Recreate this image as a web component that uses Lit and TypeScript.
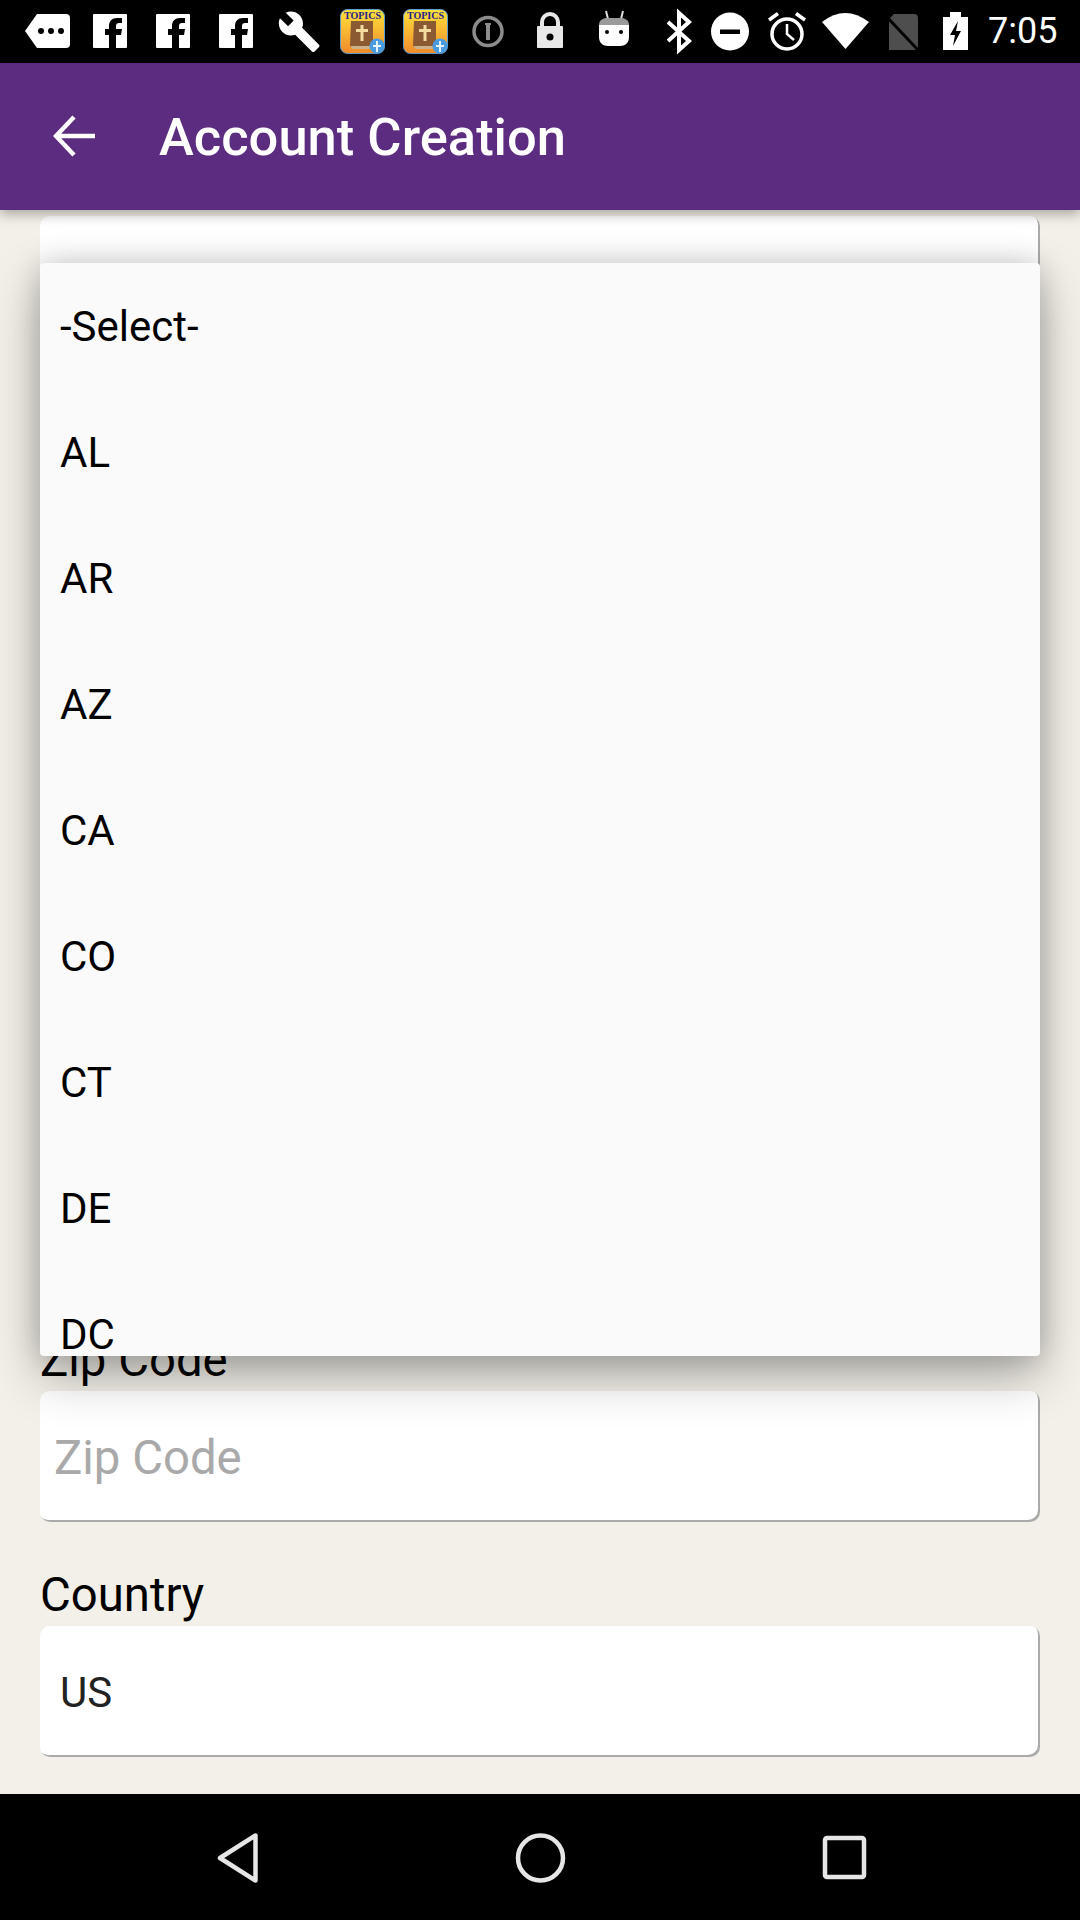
import { LitElement, css, html, svg } from 'lit'
import { customElement } from 'lit/decorators.js'

// width of each status cell runs up to the left edge of the next icon
const cell = (w: number, body: unknown) => html`<svg class="cell" width=${w} height="63" viewBox="0 0 ${w} 63">${body}</svg>`

const fb = svg`
  <rect y="14" width="34" height="34" rx="1" fill="#fff" />
  <path d="M23 48V35h5l1-6h-6v-3c0-2 1-3 3-3h3v-5h-5c-5 0-8 3-8 8v3h-4v6h4v13z" fill="#000" />`

const topics = (id: string) => svg`
  <defs>
    <linearGradient id=${id} x1="0" y1="0" x2="0" y2="1">
      <stop offset="0" stop-color="#ffe23a" />
      <stop offset="1" stop-color="#f08a2c" />
    </linearGradient>
  </defs>
  <rect x="0.5" y="9.5" width="44" height="44" rx="7" fill="url(#${id})" stroke="#5a9bd0" />
  <path d="M11 21h22v27H15c-3 0-5-1-5-3z" fill="#8b5a32" />
  <path d="M11 46h22v3H14c-2 0-3-1-3-3z" fill="#c9b28c" />
  <path d="M20.5 25h3v4h4.500v3h-4.500v9h-3v-9H16v-3h4.500z" fill="#f3dca0" />
  <circle cx="37" cy="46" r="7.500" fill="#4a9be0" />
  <path d="M36 41h2v4h3v2h-3v5h-2v-5h-3v-2h3z" fill="#e6f3ff" />
  <text x="22.500" y="19" text-anchor="middle" font-family="'Liberation Serif', serif" font-weight="700" font-size="10" fill="#24208a">TOPICS</text>`

const leftIcons = [
  cell(68, svg`
    <path d="M12 14h29a4 4 0 0 1 4 4v26a4 4 0 0 1-4 4H12L0 31z" fill="#fff" />
    <circle cx="16" cy="31" r="3" fill="#000" /><circle cx="26" cy="31" r="3" fill="#000" /><circle cx="36" cy="31" r="3" fill="#000" />`),
  cell(63, fb),
  cell(63, fb),
  cell(59, fb),
  cell(62, svg`
    <g transform="translate(-1 9.500) scale(1.85)">
      <path d="M22.700 19l-9.100-9.100c.9-2.300.4-5-1.500-6.900-2-2-5-2.400-7.400-1.300L9 6 6 9 1.600 4.700C.4 7.100.9 10.100 2.900 12.100c1.900 1.900 4.600 2.400 6.900 1.500l9.100 9.100c.4.4 1 .4 1.400 0l2.300-2.300c.5-.4.5-1.100.1-1.400z" fill="#fff" />
    </g>`),
  cell(63, topics('t1')),
  cell(69, topics('t2')),
  cell(65, svg`
    <circle cx="16" cy="31.500" r="14" fill="none" stroke="#8c8c8c" stroke-width="3.500" />
    <rect x="14" y="23" width="4" height="17" fill="#8c8c8c" />
    <rect x="13" y="23" width="6" height="2" fill="#8c8c8c" />`),
  cell(62, svg`
    <path d="M5 27v-5a8 8 0 0 1 16 0v5" fill="none" stroke="#e8e8e8" stroke-width="4" />
    <rect y="26" width="26" height="22" rx="1" fill="#e8e8e8" />
    <circle cx="13" cy="37" r="3.500" fill="#000" />`),
  cell(68, svg`
    <path d="M7 11l2 8M24 11l-2 8" stroke="#ddd" stroke-width="2" />
    <path d="M0 25c0-5 4-7 8-7h14c4 0 8 2 8 7v3H0z" fill="#9a9a9a" />
    <path d="M0 25h30v12c0 6-4 9-9 9H9c-5 0-9-3-9-9z" fill="#fff" />
    <circle cx="8" cy="32" r="2" fill="#000" /><circle cx="22" cy="32" r="2" fill="#000" />`),
]

const rightIcons = [
  cell(44, svg`<path d="M1 22l21 19-10 9V13l10 9L1 41" fill="none" stroke="#fff" stroke-width="4" />`),
  cell(57, svg`
    <circle cx="19" cy="31.500" r="19" fill="#fff" />
    <rect x="9" y="29.500" width="20" height="4.500" fill="#000" />`),
  cell(54, svg`
    <circle cx="19" cy="34" r="15" fill="none" stroke="#fff" stroke-width="3.500" />
    <path d="M19 24v10l7 6" fill="none" stroke="#fff" stroke-width="2.500" />
    <path d="M1 20l9-6.500M37 20l-9-6.500" stroke="#fff" stroke-width="3.500" />`),
  cell(63, svg`<path d="M0 22Q23 4 47 22L23.500 49z" fill="#fff" />`),
  cell(58, svg`
    <path d="M9 14h20a4 4 0 0 1 4 4v32H4V19z" fill="#4e4e4e" />
    <path d="M1 16l32 34" stroke="#000" stroke-width="3" />`),
  cell(45, svg`
    <rect x="7" y="12" width="11" height="6" fill="#fff" />
    <rect y="17" width="25" height="33" fill="#fff" />
    <path d="M15 21L7 35h5l-2 11 8-15h-5z" fill="#000" />`),
]

@customElement('app-root')
export class AppRoot extends LitElement {
  static styles = css`
    :host {
      display: block;
      font-family: Roboto, "Liberation Sans", sans-serif;
    }
    .page {
      display: flex;
      flex-direction: column;
      height: 1920px;
      background: #f3f0e9;
    }
    .status {
      display: flex;
      height: 63px;
      padding-left: 25px;
      background: #000;
    }
    .cell {
      display: block;
      flex: none;
    }
    .clock {
      color: #fff;
      font-size: 36px;
      line-height: 63px;
    }
    .appbar {
      position: relative;
      z-index: 2;
      display: flex;
      align-items: center;
      gap: 63px;
      height: 147px;
      padding: 0 0 0 53px;
      background: #5b2c7f;
      box-shadow: 0 4px 12px rgba(0, 0, 0, 0.32);
    }
    .appbar svg {
      display: block;
      margin-top: -1px;
    }
    .title {
      color: #fff;
      font-size: 52.500px;
      font-weight: 500;
    }
    .main {
      position: relative;
      flex: 1;
      overflow: hidden;
      padding: 6px 40px 0 40px;
    }
    .label {
      display: flex;
      align-items: flex-end;
      height: 104px;
      padding-bottom: 6px;
      box-sizing: border-box;
      font-size: 47.300px;
      line-height: 50px;
      color: #000;
    }
    .box {
      display: flex;
      align-items: center;
      box-sizing: border-box;
      height: 131px;
      padding: 3px 14px 0;
      border-radius: 10px;
      background: #fff;
      box-shadow: inset -2px -2px 0 #aaa;
      font-size: 47.300px;
      color: #a9a9a9;
    }
    .box.value {
      padding-top: 2px;
      padding-left: 20px;
      font-size: 42px;
      color: #222;
    }
    .popup {
      position: absolute;
      left: 40px;
      top: 53px;
      width: 1000px;
      height: 1093px;
      overflow: hidden;
      border-radius: 4px;
      background: #fafafa;
      box-shadow: 0 20px 50px rgba(0, 0, 0, 0.3), 0 0 28px rgba(0, 0, 0, 0.16);
    }
    .row {
      display: flex;
      align-items: center;
      flex: none;
      height: 126px;
      padding-left: 20px;
      font-size: 42px;
      color: #000;
    }
    .nav {
      display: flex;
      justify-content: center;
      height: 126px;
      background: #000;
    }
    .nav svg {
      display: block;
    }
  `

  render() {
    const states = ['-Select-', 'AL', 'AR', 'AZ', 'CA', 'CO', 'CT', 'DE', 'DC']
    return html`
      <div class="page">
        <div class="status">
          ${leftIcons} ${rightIcons}
          <div class="clock">7:05</div>
        </div>
        <div class="appbar">
          <svg width="43" height="44" viewBox="0 0 43 44">
            <path d="M42 22H3M21 3L3 22l18 19" fill="none" stroke="#fff" stroke-width="4.500" />
          </svg>
          <div class="title">Account Creation</div>
        </div>
        <div class="main">
          <div class="box"></div>
          ${[0, 1, 2, 3].map(() => html`<div class="label"></div><div class="box"></div>`)}
          <div class="label">Zip Code</div>
          <div class="box">Zip Code</div>
          <div class="label">Country</div>
          <div class="box value">US</div>
          <div class="popup">
            ${states.map((s) => html`<div class="row">${s}</div>`)}
          </div>
        </div>
        <div class="nav">
          <svg width="1080" height="126" viewBox="0 0 1080 126">
            <path d="M255.500 41.500v45L220 64z" fill="none" stroke="#e6e6e6" stroke-width="4.500" stroke-linejoin="round" />
            <circle cx="540.500" cy="64" r="22.500" fill="none" stroke="#e6e6e6" stroke-width="4.500" />
            <rect x="825" y="44" width="39" height="39" rx="2" fill="none" stroke="#e6e6e6" stroke-width="4.500" />
          </svg>
        </div>
      </div>
    `
  }
}
